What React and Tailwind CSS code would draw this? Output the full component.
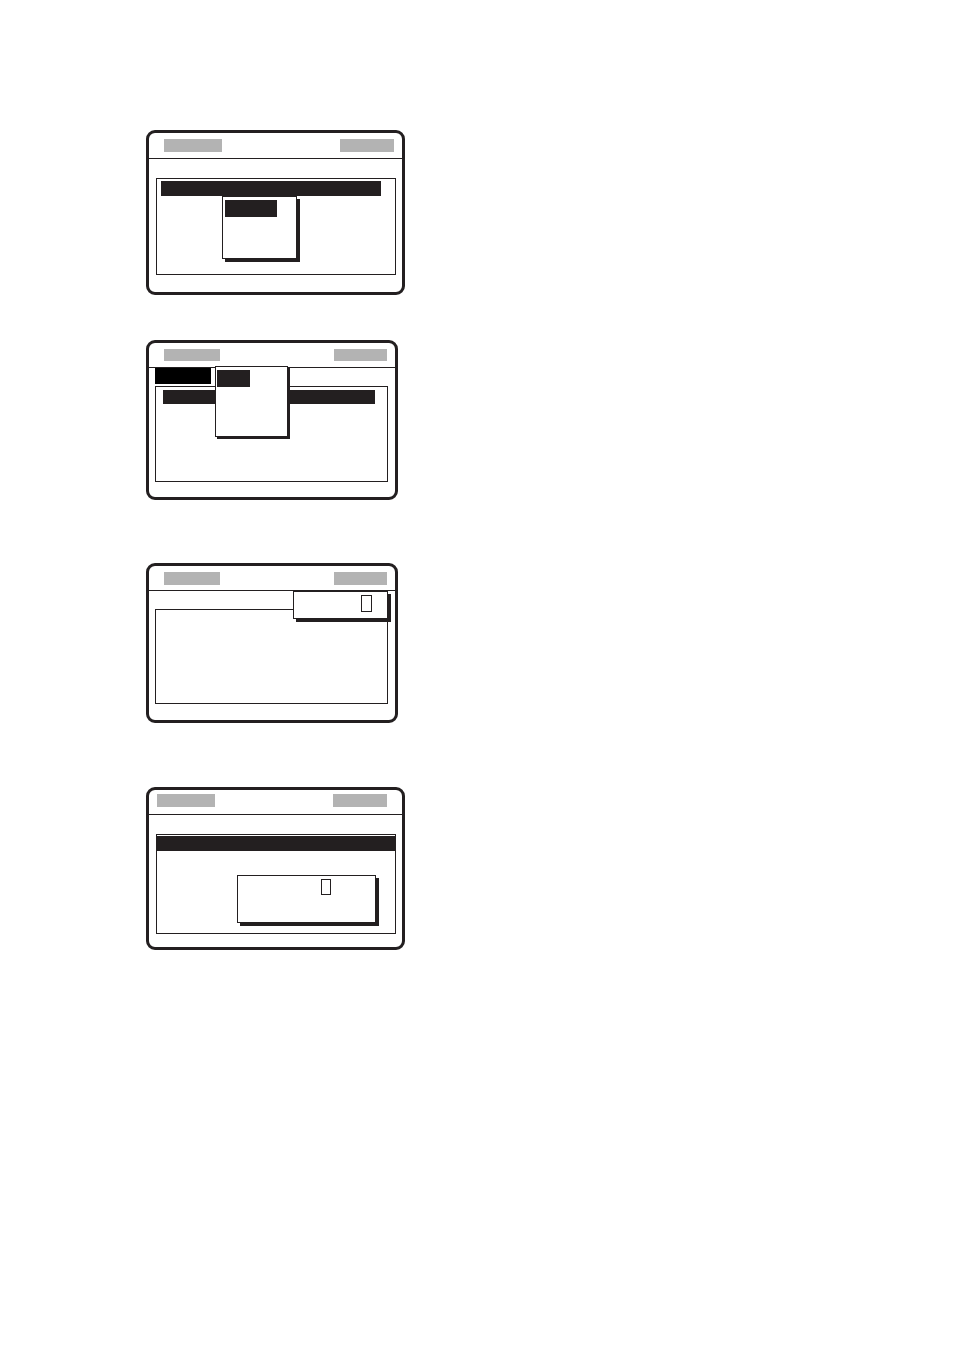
const ink = 'border-[#231f20]';

function Panel({ className, children }) {
  return (
    <div className={`relative bg-white border-[3px] ${ink} rounded-[9px] ${className}`}>{children}</div>
  );
}

export default function App() {
  return (
    <div className="bg-white min-h-[1350px] w-[954px] pl-[146px] pt-[130px] flex flex-col items-start">
      {/* 1 */}
      <Panel className="w-[259px] h-[165px]">
        <div className={`h-[26px] flex justify-between items-start pl-[15px] pr-[8px] pt-[6px] border-b ${ink}`}>
          <div className="w-[58px] h-[13px] bg-[#b3b3b3]" />
          <div className="w-[54px] h-[13px] bg-[#b3b3b3]" />
        </div>
        <div className={`ml-[7px] mt-[19px] w-[240px] h-[97px] border ${ink}`}>
          <div className="ml-[4px] mt-[2px] w-[220px] h-[15px] bg-[#231f20]" />
        </div>
        <div className={`absolute left-[73px] top-[63px] w-[75px] h-[63px] bg-white border ${ink} shadow-[3px_3px_0_#231f20]`}>
          <div className="ml-[2px] mt-[3px] w-[52px] h-[17px] bg-[#231f20]" />
        </div>
      </Panel>

      {/* 2 */}
      <Panel className="mt-[45px] w-[252px] h-[160px]">
        <div className={`h-[25px] flex justify-between items-start pl-[15px] pr-[8px] pt-[6px] border-b ${ink}`}>
          <div className="w-[56px] h-[12px] bg-[#b3b3b3]" />
          <div className="w-[53px] h-[12px] bg-[#b3b3b3]" />
        </div>
        <div className={`ml-[6px] mt-[18px] w-[233px] h-[96px] border ${ink}`}>
          <div className="ml-[7px] mt-[3px] w-[212px] h-[14px] bg-[#231f20]" />
        </div>
        <div className="absolute left-[6px] top-[25px] w-[56px] h-[16px] bg-black" />
        <div className={`absolute left-[66px] top-[23px] w-[73px] h-[71px] bg-white border ${ink} shadow-[2px_2px_0_#231f20]`}>
          <div className="ml-[1px] mt-[3px] w-[33px] h-[17px] bg-[#231f20]" />
        </div>
      </Panel>

      {/* 3 */}
      <Panel className="mt-[63px] w-[252px] h-[160px]">
        <div className={`h-[25px] flex justify-between items-start pl-[15px] pr-[8px] pt-[6px] border-b ${ink}`}>
          <div className="w-[56px] h-[13px] bg-[#b3b3b3]" />
          <div className="w-[53px] h-[13px] bg-[#b3b3b3]" />
        </div>
        <div className={`ml-[6px] mt-[18px] w-[233px] h-[95px] border ${ink}`} />
        <div className={`absolute left-[144px] top-[25px] w-[95px] h-[28px] bg-white border ${ink} shadow-[3px_3px_0_#231f20]`}>
          <div className={`ml-[67px] mt-[3px] w-[11px] h-[17px] border ${ink}`} />
        </div>
      </Panel>

      {/* 4 */}
      <Panel className="mt-[64px] w-[259px] h-[163px]">
        <div className={`h-[25px] flex justify-between items-start pl-[8px] pr-[15px] pt-[4px] border-b ${ink}`}>
          <div className="w-[58px] h-[13px] bg-[#b3b3b3]" />
          <div className="w-[54px] h-[13px] bg-[#b3b3b3]" />
        </div>
        <div className={`ml-[7px] mt-[19px] w-[240px] h-[100px] border ${ink}`}>
          <div className="mt-[1px] w-full h-[15px] bg-[#231f20]" />
        </div>
        <div className={`absolute left-[88px] top-[85px] w-[139px] h-[48px] bg-white border ${ink} shadow-[3px_3px_0_#231f20]`}>
          <div className={`ml-[83px] mt-[3px] w-[10px] h-[16px] border ${ink}`} />
        </div>
      </Panel>
    </div>
  );
}
